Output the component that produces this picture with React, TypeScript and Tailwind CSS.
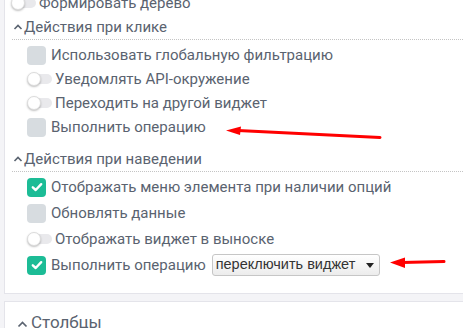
import React from "react";

const font = { fontFamily: "Roboto, 'Noto Sans', sans-serif" };

function Toggle() {
  return (
    <span className="relative inline-block w-[25px] h-[14px] shrink-0">
      <span className="absolute left-[3px] top-[2px] w-[22px] h-[10px] rounded-full bg-[#e9e9ec]" />
      <span className="absolute left-0 top-0 w-[14px] h-[14px] rounded-full bg-white border border-[#dcdcdc] shadow-[0_1px_2px_rgba(0,0,0,0.25)]" />
    </span>
  );
}

function Checkbox({ checked }: { checked?: boolean }) {
  return (
    <span
      className={
        "inline-flex items-center justify-center w-[19px] h-[19px] rounded-[4px] shrink-0 " +
        (checked ? "bg-[#1cbc96]" : "bg-[#d7dce0]")
      }
    >
      {checked && (
        <svg width="14" height="14" viewBox="0 0 14 14">
          <path d="M2.8 7.3 L5.7 10 L11.2 4.2" fill="none" stroke="white" strokeWidth="2.4" strokeLinecap="round" strokeLinejoin="round" />
        </svg>
      )}
    </span>
  );
}

function Chevron() {
  return (
    <svg width="10" height="8" viewBox="0 0 10 8" className="shrink-0">
      <path d="M1.5 6 L5 2.5 L8.5 6" fill="none" stroke="#5a6370" strokeWidth="1.6" />
    </svg>
  );
}

function Header({ text }: { text: string }) {
  return (
    <div className="h-[25px] ml-[7px] flex items-center pl-[1px] gap-[1px] border-b border-dotted border-[#c4c4c4] text-[15px] text-[#5a6370]">
      <Chevron />
      <span>{text}</span>
    </div>
  );
}

function CheckRow({ text, checked, h, children }: { text: string; checked?: boolean; h: string; children?: React.ReactNode }) {
  return (
    <div className={"flex items-center pl-[22px] gap-[5px] " + h}>
      <Checkbox checked={checked} />
      <span>{text}</span>
      {children}
    </div>
  );
}

function ToggleRow({ text, h }: { text: string; h: string }) {
  return (
    <div className={"flex items-center pl-[22px] gap-[3px] " + h}>
      <Toggle />
      <span>{text}</span>
    </div>
  );
}

export default function App() {
  return (
    <div className="relative w-[463px] h-[328px] overflow-hidden bg-[#f4f4f7] pl-[4px] text-[15px] text-[#5a6370]" style={font}>
      <div className="bg-white border-l border-b border-[#e4e4ea] mt-[-9px] pb-[15px]">
        <div className="h-[24px] flex items-center pl-[6px] gap-[3px]">
          <Toggle />
          <span>Формировать дерево</span>
        </div>
        <Header text="Действия при клике" />
        <div className="pt-[3px]">
          <CheckRow h="h-[24px]" text="Использовать глобальную фильтрацию" />
          <ToggleRow h="h-[24px]" text="Уведомлять API-окружение" />
          <ToggleRow h="h-[24px]" text="Переходить на другой виджет" />
          <CheckRow h="h-[24px]" text="Выполнить операцию" />
        </div>
        <div className="mt-[8px]">
          <Header text="Действия при наведении" />
        </div>
        <div className="pt-[2px]">
          <CheckRow h="h-[26px]" checked text="Отображать меню элемента при наличии опций" />
          <CheckRow h="h-[26px]" text="Обновлять данные" />
          <ToggleRow h="h-[26px]" text="Отображать виджет в выноске" />
          <CheckRow h="h-[26px]" checked text="Выполнить операцию">
            <div
              className="ml-[1px] w-[168px] h-[22px] flex items-center justify-between pl-[3px] pr-[5px] rounded-[3px] border border-[#c6c6c6] bg-gradient-to-b from-white to-[#ececec] text-[14.5px] text-[#333]"
              style={{ fontFamily: "'Liberation Sans', Arial, sans-serif" }}
            >
              <span>переключить виджет</span>
              <svg width="8" height="5" viewBox="0 0 8 5">
                <path d="M0 0 L8 0 L4 5 Z" fill="#222" />
              </svg>
            </div>
          </CheckRow>
        </div>
      </div>
      <div className="mt-[7px] bg-white border-l border-t border-[#e4e4ea] h-[40px] pt-[8px] pl-[12px] flex items-start gap-[3px] text-[17px] leading-[24px] text-[#5a6370]">
        <svg width="11" height="8" viewBox="0 0 11 8" className="shrink-0 mt-[10px]">
          <path d="M1.5 6.5 L5.5 2.5 L9.5 6.5" fill="none" stroke="#5a6370" strokeWidth="1.7" />
        </svg>
        <span>Столбцы</span>
      </div>
      <svg className="absolute left-0 top-0 pointer-events-none" width="463" height="328">
        <path d="M380 137.5 L238 130.5" stroke="#ff0000" strokeWidth="3" strokeLinecap="round" />
        <path d="M226 130.5 L241 126.5 L240 135 Z" fill="#ff0000" />
        <path d="M444 261.5 L402 262.5" stroke="#ff0000" strokeWidth="3" strokeLinecap="round" />
        <path d="M390 262.5 L405 257.5 L405 268 Z" fill="#ff0000" />
      </svg>
    </div>
  );
}
